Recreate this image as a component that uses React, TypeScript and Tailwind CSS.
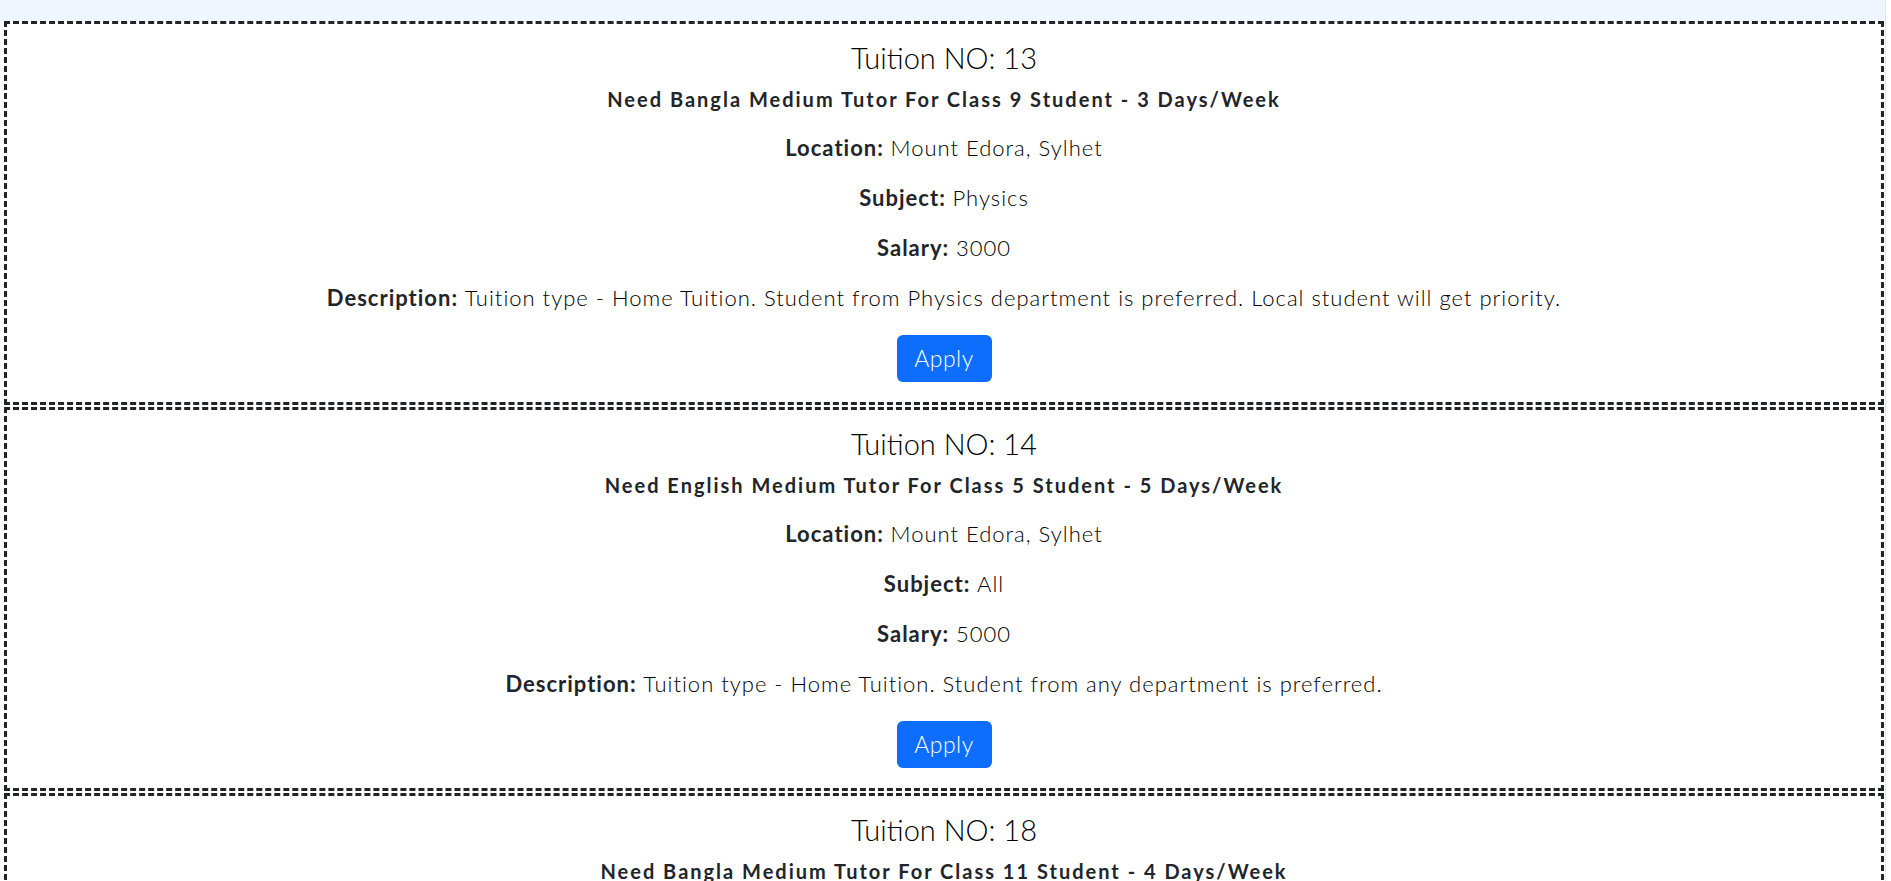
const tuitions = [
  {
    no: 13,
    title: 'Need Bangla Medium Tutor For Class 9 Student - 3 Days/Week',
    location: 'Mount Edora, Sylhet',
    subject: 'Physics',
    salary: 3000,
    description:
      'Tuition type - Home Tuition. Student from Physics department is preferred. Local student will get priority.',
  },
  {
    no: 14,
    title: 'Need English Medium Tutor For Class 5 Student - 5 Days/Week',
    location: 'Mount Edora, Sylhet',
    subject: 'All',
    salary: 5000,
    description: 'Tuition type - Home Tuition. Student from any department is preferred.',
  },
  {
    no: 18,
    title: 'Need Bangla Medium Tutor For Class 11 Student - 4 Days/Week',
    location: 'Zindabazar, Sylhet',
    subject: 'Mathematics',
    salary: 4000,
    description: 'Tuition type - Home Tuition. Student from Mathematics department is preferred.',
  },
];

function Field({ label, value }: { label: string; value: string | number }) {
  return (
    <p className="mb-4 text-[22px] leading-[34px] tracking-[1px]">
      <span className="font-bold">{label}:</span> <span className="font-light text-black">{value}</span>
    </p>
  );
}

export default function App() {
  return (
    <div
      className="h-[881px] w-[1886px] overflow-hidden border-r border-[#e5e7eb] bg-white text-[#212529]"
      style={{ fontFamily: 'Lato, "Open Sans", sans-serif' }}
    >
      <div className="h-[21px] bg-[#eff6ff]" />
      <div className="flex flex-col gap-[2px]">
        {tuitions.map((t) => (
          <div
            key={t.no}
            className="ml-1 mr-[1px] flex flex-col items-center border-[3px] border-dashed border-[#212529] px-4 pt-4 pb-5 text-center"
          >
            <h3 className="mb-[9px] text-[29px] font-light leading-[36px] text-black">Tuition NO: {t.no}</h3>
            <h5 className="mb-[18px] text-[20px] font-bold leading-[28px] tracking-[2px]">{t.title}</h5>
            <Field label="Location" value={t.location} />
            <Field label="Subject" value={t.subject} />
            <Field label="Salary" value={t.salary} />
            <p className="mb-5 text-[22px] leading-[34px] tracking-[1px]">
              <span className="font-bold">Description:</span>{' '}
              <span className="font-light text-black">{t.description}</span>
            </p>
            <button className="h-[47px] w-[95px] rounded-md bg-[#0d6efd] text-[23px] font-light tracking-[0.5px] text-white">
              Apply
            </button>
          </div>
        ))}
      </div>
    </div>
  );
}
